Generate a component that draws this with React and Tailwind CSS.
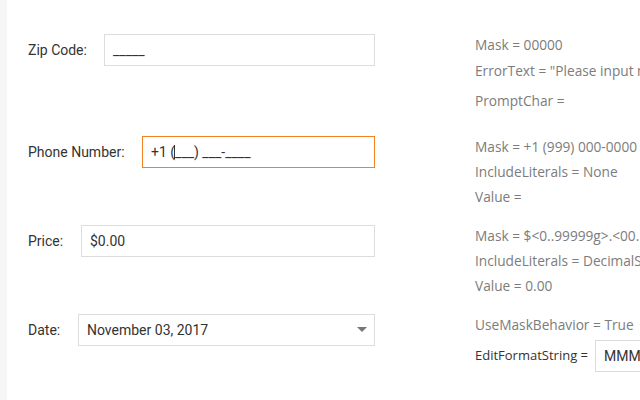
import React from "react";

const rightText = "text-[#7c7c7c] text-[13.7px] leading-[25px]";

const Field = ({ label, labelWidth, children, focused }) => (
  <div className="flex items-center h-8">
    <div className={`${labelWidth} shrink-0 text-[14px] text-[#333]`}>{label}</div>
    <div
      className={`flex-1 h-8 flex items-center px-2 bg-white border text-[14px] text-[#333] ${
        focused ? "border-[#f58220]" : "border-[#dcdcdc]"
      }`}
    >
      {children}
    </div>
  </div>
);

export default function App() {
  return (
    <div className="w-[640px] h-[400px] flex bg-white overflow-hidden font-['Roboto',sans-serif]">
      <div className="w-[7px] shrink-0 bg-[#f6f6f6]" />
      <div className="flex-1 min-w-0 flex flex-col pt-[34px]">
        {/* zip code */}
        <div className="flex h-[102px]">
          <div className="w-[347px] shrink-0 ml-[21px]">
            <Field label="Zip Code:" labelWidth="w-[76px]">
              <span>_____</span>
            </Field>
          </div>
          <div className="ml-[100px] -mt-[2px] font-['Open_Sans',sans-serif] whitespace-nowrap">
            <div className={rightText}>Mask = 00000</div>
            <div className={`${rightText} mt-px`}>ErrorText = "Please input mask"</div>
            <div className={`${rightText} mt-[5px]`}>PromptChar =</div>
          </div>
        </div>

        {/* phone */}
        <div className="flex h-[89px]">
          <div className="w-[347px] shrink-0 ml-[21px]">
            <Field label="Phone Number:" labelWidth="w-[114px]" focused>
              <span>+1 (</span>
              <span className="w-px h-[14px] bg-[#333] -ml-px" />
              <span>___) ___-____</span>
            </Field>
          </div>
          <div className="ml-[100px] -mt-[2px] font-['Open_Sans',sans-serif] whitespace-nowrap">
            <div className={rightText}>Mask = +1 (999) 000-0000</div>
            <div className={rightText}>IncludeLiterals = None</div>
            <div className={rightText}>Value =</div>
          </div>
        </div>

        {/* price */}
        <div className="flex h-[89px]">
          <div className="w-[347px] shrink-0 ml-[21px]">
            <Field label="Price:" labelWidth="w-[53px]">
              <span>$0.00</span>
            </Field>
          </div>
          <div className="ml-[100px] -mt-[2px] font-['Open_Sans',sans-serif] whitespace-nowrap">
            <div className={rightText}>Mask = $&lt;0..99999g&gt;.&lt;00..99&gt;</div>
            <div className={rightText}>IncludeLiterals = DecimalSymbol</div>
            <div className={rightText}>Value = 0.00</div>
          </div>
        </div>

        {/* date */}
        <div className="flex">
          <div className="w-[347px] shrink-0 ml-[21px]">
            <div className="flex items-center h-8">
              <div className="w-[50px] shrink-0 text-[14px] text-[#333]">Date:</div>
              <div className="flex-1 h-8 flex items-center justify-between pl-2 pr-[7px] bg-white border border-[#dcdcdc] text-[14px] text-[#333]">
                <span>November 03, 2017</span>
                <svg width="10" height="6" viewBox="0 0 10 6">
                  <path d="M0 0 L10 0 L5 5 Z" fill="#777" />
                </svg>
              </div>
            </div>
          </div>
          <div className="ml-[100px] -mt-[2px] font-['Open_Sans',sans-serif] whitespace-nowrap">
            <div className={rightText}>UseMaskBehavior = True</div>
            <div className="flex items-center mt-[3px]">
              <span className="text-[13px] text-[#333]">EditFormatString =</span>
              <div className="ml-[7px] h-8 w-[120px] shrink-0 flex items-center px-2 border border-[#dcdcdc] text-[14px] text-[#333] font-['Roboto',sans-serif]">
                MMMM dd, yyyy
              </div>
            </div>
          </div>
        </div>
      </div>
    </div>
  );
}
